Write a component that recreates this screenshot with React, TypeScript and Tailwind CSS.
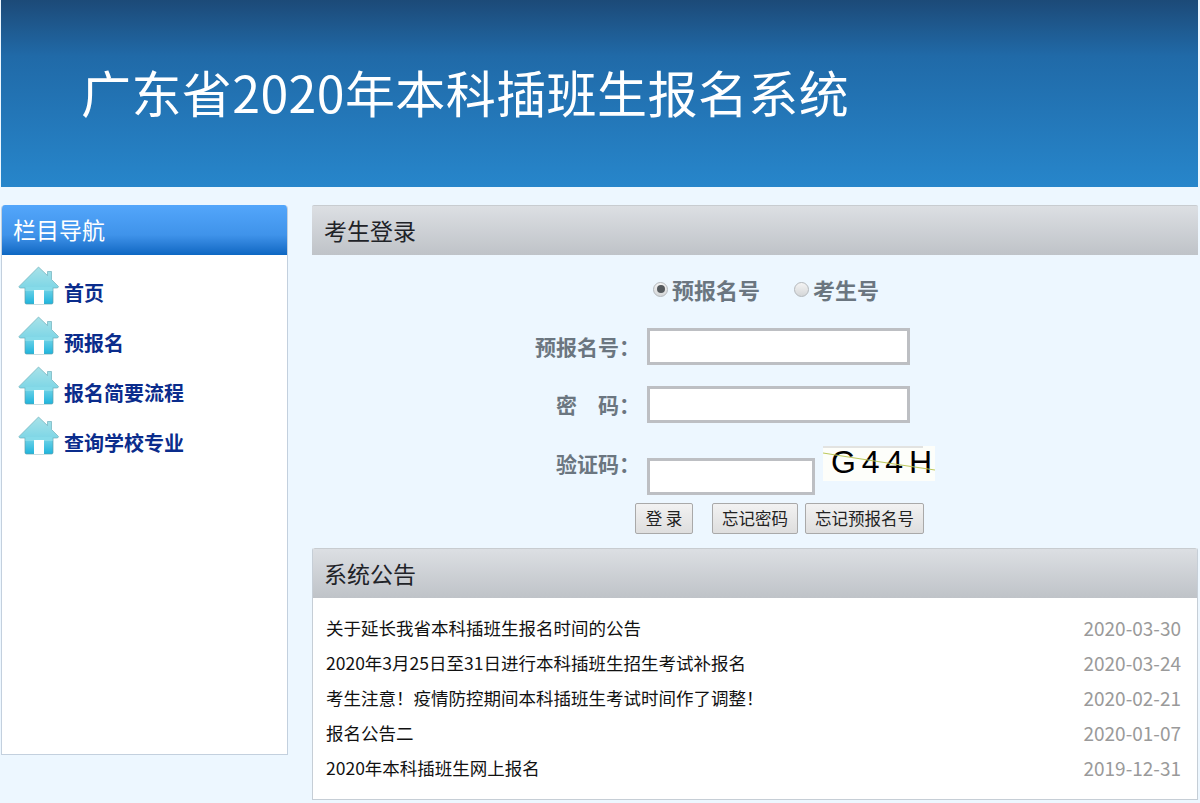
const font = { fontFamily: '"Noto Sans CJK SC", "Noto Sans", sans-serif' };

const navItems = ["首页", "预报名", "报名简要流程", "查询学校专业"];

const notices = [
  { title: "关于延长我省本科插班生报名时间的公告", date: "2020-03-30" },
  { title: "2020年3月25日至31日进行本科插班生招生考试补报名", date: "2020-03-24" },
  { title: "考生注意！疫情防控期间本科插班生考试时间作了调整！", date: "2020-02-21" },
  { title: "报名公告二", date: "2020-01-07" },
  { title: "2020年本科插班生网上报名", date: "2019-12-31" },
];

function HouseIcon({ id }: { id: string }) {
  return (
    <svg width="42" height="40" viewBox="0 0 42 40" className="shrink-0">
      <defs>
        <linearGradient id={`roof-${id}`} x1="0" y1="0" x2="0" y2="1">
          <stop offset="0" stopColor="#a8e2e8" />
          <stop offset="1" stopColor="#7ed6e6" />
        </linearGradient>
        <linearGradient id={`wall-${id}`} x1="0" y1="0" x2="0" y2="1">
          <stop offset="0" stopColor="#8adcea" />
          <stop offset="1" stopColor="#1fb4dc" />
        </linearGradient>
      </defs>
      <path d="M7 18H35V36.5Q35 38 33.5 38H8.5Q7 38 7 36.5Z" fill={`url(#wall-${id})`} stroke="#5f9eab" strokeWidth="0.7" />
      <path
        d="M1 20.5L20.5 1L29.5 9.5V5.5H33.5V13.5L40.5 20.5Q40.5 22 38.5 22H7.5H2.5Q1 22 1 20.5Z"
        fill={`url(#roof-${id})`}
        stroke="#6fb0bc"
        strokeWidth="0.7"
      />
      <rect x="7.4" y="21" width="27.2" height="4" fill="#86dbe9" />
      <rect x="16" y="24" width="10" height="14" fill="#ffffff" />
    </svg>
  );
}

function PanelHead({ title, inset }: { title: string; inset?: boolean }) {
  return (
    <div
      className={`flex h-[50px] items-center rounded-t-[2px] border-t border-[#c8ccd0] bg-gradient-to-b from-[#dcdfe3] to-[#bfc3c8] pb-px text-[23px] text-[#1f2328] ${inset ? "pl-[11px]" : "pl-3"}`}
    >
      {title}
    </div>
  );
}

function Radio({ checked }: { checked?: boolean }) {
  return (
    <span className="flex h-[15px] w-[15px] items-center justify-center rounded-full border border-[#b4b8bc] bg-gradient-to-b from-[#f4f4f4] to-[#d4d6d8]">
      {checked && <span className="h-[8px] w-[8px] rounded-full bg-[#555a5e]" />}
    </span>
  );
}

function Field({ label, wide = true }: { label: string; wide?: boolean }) {
  return (
    <input
      aria-label={label}
      className={`h-[37px] border-[3px] border-[#bdbfc3] bg-white ${wide ? "w-[263px]" : "w-[168px]"}`}
    />
  );
}

function FormButton({ text, width, className = "" }: { text: string; width: string; className?: string }) {
  return (
    <button
      className={`flex h-[31px] items-center justify-center rounded-[2px] border border-[#a9a9a9] bg-gradient-to-b from-[#f2f2f2] to-[#dedede] text-[16.5px] font-normal text-[#222] ${width} ${className}`}
    >
      {text}
    </button>
  );
}

export default function App() {
  return (
    <div className="h-[803px] w-[1200px] overflow-hidden bg-[#edf7ff]" style={font}>
      <div className="ml-px flex h-[187px] w-[1197px] items-start bg-gradient-to-b from-[#1c4a78] via-[#206aa8] via-30% to-[#2786cb] pl-[80px] pt-[55px] text-[50px] leading-[72px] tracking-[0.42px] text-white">
        广东省2020年本科插班生报名系统
      </div>

      <div className="flex items-start pt-[18px]">
        {/* left nav */}
        <div className="ml-px h-[550px] w-[287px] overflow-hidden rounded-t-[4px] border-x border-b border-[#c3d0de] bg-white">
          <div className="flex h-[50px] items-center bg-gradient-to-b from-[#53a6fb] via-[#3f93ea] via-60% to-[#0c67c2] pb-px pl-[11px] text-[23px] text-white">
            栏目导航
          </div>
          <div className="flex flex-col gap-[10px] pl-[16px] pt-[11px]">
            {navItems.map((item, i) => (
              <div key={item} className="flex h-[40px] items-end gap-[4px]">
                <HouseIcon id={String(i)} />
                <span className="text-[20px] font-bold leading-[26px] text-[#0a2c8c]">{item}</span>
              </div>
            ))}
          </div>
        </div>

        {/* right column */}
        <div className="ml-[24px] w-[886px]">
          <PanelHead title="考生登录" />
          <div className="h-[293px] text-[21px] font-bold text-[#6b7680]">
            <div className="flex h-[68px] items-center pl-[341px] text-[22px]">
              <Radio checked />
              <span className="ml-[4px] leading-none">预报名号</span>
              <span className="ml-[34px]"><Radio /></span>
              <span className="ml-[4px] leading-none">考生号</span>
            </div>
            <div className="mt-[5px] flex h-[37px] items-center">
              <span className="w-[328px] text-right leading-none">预报名号：</span>
              <span className="ml-[7px]"><Field label="预报名号" /></span>
            </div>
            <div className="mt-[21px] flex h-[37px] items-center">
              <span className="w-[328px] text-right leading-none">密&emsp;码：</span>
              <span className="ml-[7px]"><Field label="密码" /></span>
            </div>
            <div className="mt-[21px] flex h-[49px] items-start">
              <span className="mt-[9px] w-[328px] text-right leading-none">验证码：</span>
              <span className="ml-[7px] mt-[14px]"><Field label="验证码" wide={false} /></span>
              <div
                className="relative ml-[8px] mt-[2px] flex h-[35px] w-[112px] justify-between bg-[#fdfefa] pl-[8px] pr-[3px] text-[32px] font-normal leading-[33px] text-black"
                style={{ fontFamily: '"Liberation Sans", sans-serif' }}
              >
                <span>G</span>
                <span>4</span>
                <span>4</span>
                <span>H</span>
                <svg className="absolute inset-0" width="112" height="35" viewBox="0 0 112 35">
                  <path d="M0 7Q50 15 112 24" fill="none" stroke="#bcc85c" strokeWidth="1.2" />
                  <path d="M0 1H100" fill="none" stroke="#c8c8c8" strokeWidth="1" />
                </svg>
              </div>
            </div>
            <div className="mt-[10px] flex pl-[323px]">
              <FormButton text="登 录" width="w-[58px]" />
              <FormButton text="忘记密码" width="w-[86px]" className="ml-[19px]" />
              <FormButton text="忘记预报名号" width="w-[119px]" className="ml-[7px]" />
            </div>
          </div>

          <div className="h-[252px] overflow-hidden rounded-t-[2px] border-x border-b border-[#c6ced6] bg-white">
            <PanelHead title="系统公告" inset />
            <div className="flex flex-col pl-[13px] pr-[16px] pt-[13px]">
              {notices.map((n) => (
                <div key={n.date} className="flex h-[35px] items-center justify-between text-[17.5px]">
                  <span className="text-[#111]">{n.title}</span>
                  <span className="text-[19px] text-[#9a9a9a]">{n.date}</span>
                </div>
              ))}
            </div>
          </div>
        </div>
      </div>
    </div>
  );
}
